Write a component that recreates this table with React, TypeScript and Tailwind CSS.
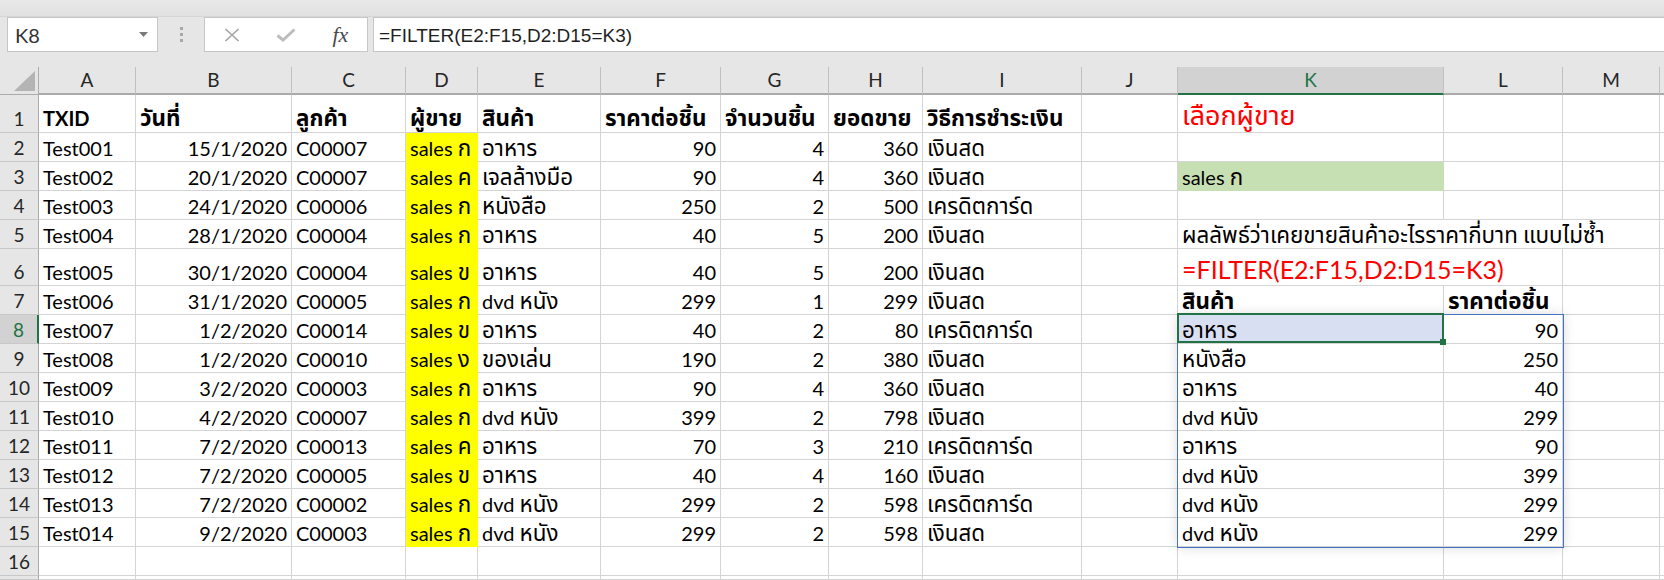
import React from 'react';

type Tone = 'plain' | 'yellow' | 'green' | 'picked';

const toneClass: Record<Tone, string> = {
  plain: 'bg-white border-[#d4d4d4]',
  yellow: 'bg-[#ffff00] border-[#ffff00]',
  green: 'bg-[#c6e0b4] border-[#c6e0b4]',
  picked: 'bg-[#d9dff2] border-[#d4d4d4]',
};

const letters = ['A', 'B', 'C', 'D', 'E', 'F', 'G', 'H', 'I', 'J', 'K', 'L', 'M', ''];

const heads = ['TXID', 'วันที่', 'ลูกค้า', 'ผู้ขาย', 'สินค้า', 'ราคาต่อชิ้น', 'จำนวนชิ้น', 'ยอดขาย', 'วิธีการชำระเงิน'];

const sales: string[][] = [
  ['Test001', '15/1/2020', 'C00007', 'sales ก', 'อาหาร', '90', '4', '360', 'เงินสด'],
  ['Test002', '20/1/2020', 'C00007', 'sales ค', 'เจลล้างมือ', '90', '4', '360', 'เงินสด'],
  ['Test003', '24/1/2020', 'C00006', 'sales ก', 'หนังสือ', '250', '2', '500', 'เครดิตการ์ด'],
  ['Test004', '28/1/2020', 'C00004', 'sales ก', 'อาหาร', '40', '5', '200', 'เงินสด'],
  ['Test005', '30/1/2020', 'C00004', 'sales ข', 'อาหาร', '40', '5', '200', 'เงินสด'],
  ['Test006', '31/1/2020', 'C00005', 'sales ก', 'dvd หนัง', '299', '1', '299', 'เงินสด'],
  ['Test007', '1/2/2020', 'C00014', 'sales ข', 'อาหาร', '40', '2', '80', 'เครดิตการ์ด'],
  ['Test008', '1/2/2020', 'C00010', 'sales ง', 'ของเล่น', '190', '2', '380', 'เงินสด'],
  ['Test009', '3/2/2020', 'C00003', 'sales ก', 'อาหาร', '90', '4', '360', 'เงินสด'],
  ['Test010', '4/2/2020', 'C00007', 'sales ก', 'dvd หนัง', '399', '2', '798', 'เงินสด'],
  ['Test011', '7/2/2020', 'C00013', 'sales ค', 'อาหาร', '70', '3', '210', 'เครดิตการ์ด'],
  ['Test012', '7/2/2020', 'C00005', 'sales ข', 'อาหาร', '40', '4', '160', 'เงินสด'],
  ['Test013', '7/2/2020', 'C00002', 'sales ก', 'dvd หนัง', '299', '2', '598', 'เครดิตการ์ด'],
  ['Test014', '9/2/2020', 'C00003', 'sales ก', 'dvd หนัง', '299', '2', '598', 'เงินสด'],
];

// ผลลัพธ์ของ FILTER ที่ spill ลงมาใน K8:L15
const spill: [string, string][] = [
  ['อาหาร', '90'],
  ['หนังสือ', '250'],
  ['อาหาร', '40'],
  ['dvd หนัง', '299'],
  ['อาหาร', '90'],
  ['dvd หนัง', '399'],
  ['dvd หนัง', '299'],
  ['dvd หนัง', '299'],
];

const rightCols = [1, 5, 6, 7];

// ฟอนต์ไทยที่ได้มาตัวเล็กกว่าใน Excel เลยขยายเฉพาะช่วงที่เป็นภาษาไทย
const thai = (text: string) =>
  text.split(/([\u0E00-\u0E7F]+)/).map((part, i) =>
    /[\u0E00-\u0E7F]/.test(part) ? (
      <span key={i} className="text-[1.12em]">
        {part}
      </span>
    ) : (
      part
    )
  );

const Cell: React.FC<{
  children?: React.ReactNode;
  tone?: Tone;
  right?: boolean;
  extra?: string;
}> = ({ children, tone = 'plain', right = false, extra = '' }) => (
  <div
    className={`flex items-end whitespace-nowrap border-r border-b px-[4px] pb-[2px] text-[20px] leading-[22px] ${toneClass[tone]} ${right ? 'justify-end' : ''} ${extra}`}
  >
    {typeof children === 'string' ? <span>{thai(children)}</span> : children}
  </div>
);

const RowHead: React.FC<{ n: string; active?: boolean }> = ({ n, active = false }) => (
  <div
    className={`flex items-end justify-center border-b border-b-[#c8c8c8] pb-[3px] text-[19px] leading-[20px] ${
      active ? 'border-r-2 border-r-[#217346] bg-[#d2d2d2] text-[#217346]' : 'border-r border-r-[#ababab] bg-[#e6e6e6] text-[#262626]'
    }`}
  >
    {n}
  </div>
);

const FormulaBar: React.FC = () => (
  <div className="flex h-[35px] items-stretch pl-[7px]">
    <div className="flex w-[151px] items-center justify-between border border-[#c6c6c6] bg-white pl-[7px] pr-[9px]">
      <span className="text-[20px] leading-none text-[#333]">K8</span>
      <svg width="9" height="5" viewBox="0 0 9 5">
        <path d="M0 0h9L4.5 5z" fill="#7b7b7b" />
      </svg>
    </div>
    <div className="flex w-[46px] flex-col items-center justify-center gap-[3px]">
      <span className="h-[3px] w-[3px] bg-[#a8a8a8]" />
      <span className="h-[3px] w-[3px] bg-[#a8a8a8]" />
      <span className="h-[3px] w-[3px] bg-[#a8a8a8]" />
    </div>
    <div className="flex w-[164px] items-center border border-[#c6c6c6] bg-white">
      <div className="flex w-[55px] justify-center">
        <svg width="16" height="14" viewBox="0 0 16 14">
          <path d="M1.5 1l13 12M14.5 1l-13 12" stroke="#a3a3a3" strokeWidth="1.6" fill="none" />
        </svg>
      </div>
      <div className="flex w-[55px] justify-center">
        <svg width="20" height="14" viewBox="0 0 20 14">
          <path d="M1.5 7.5l5.5 4.5L18.5 1.5" stroke="#bdbdbd" strokeWidth="3" fill="none" />
        </svg>
      </div>
      <div className="flex w-[54px] justify-center font-['Liberation_Serif',serif] text-[22px] italic leading-none text-[#4a4a4a]">
        fx
      </div>
    </div>
    <div className="ml-[5px] flex flex-1 items-center border border-r-0 border-[#c6c6c6] bg-white pt-[3px] pl-[5px] font-['Liberation_Sans',sans-serif] text-[19px] text-[#1f1f1f]">
      =FILTER(E2:F15,D2:D15=K3)
    </div>
  </div>
);

const SpillRange: React.FC = () => (
  <div className="relative z-10 col-span-2 row-span-8 grid grid-cols-[266px_119px] grid-rows-[repeat(8,29px)] shadow-[0_0_12px_rgba(0,0,0,0.16)] outline-1 outline-solid outline-[#4472c4]">
    {spill.map(([name, price], i) => (
      <React.Fragment key={i}>
        <Cell tone={i === 0 ? 'picked' : 'plain'} extra={i === 0 ? 'relative' : ''}>
          <span>{thai(name)}</span>
          {i === 0 && (
            <>
              <span className="pointer-events-none absolute -top-[2px] -left-px -right-px bottom-0 border-2 border-[#217346]" />
              <span className="absolute -right-[3px] -bottom-[2px] h-[6px] w-[6px] bg-[#217346]" />
            </>
          )}
        </Cell>
        <Cell right>{price}</Cell>
      </React.Fragment>
    ))}
  </div>
);

const Sheet: React.FC = () => {
  const body: React.ReactNode[] = [];

  for (let r = 1; r <= 17; r++) {
    body.push(<RowHead key={`h${r}`} n={r <= 16 ? String(r) : ''} active={r === 8} />);

    for (let c = 0; c < 9; c++) {
      const key = `${r}-${c}`;
      if (r === 1) {
        body.push(
          <Cell key={key} extra="font-bold pb-[3px]">
            {heads[c]}
          </Cell>
        );
      } else if (r <= 15) {
        body.push(
          <Cell key={key} tone={c === 3 ? 'yellow' : 'plain'} right={rightCols.includes(c)}>
            {sales[r - 2][c]}
          </Cell>
        );
      } else {
        body.push(<Cell key={key} />);
      }
    }

    // J
    body.push(<Cell key={`${r}-J`} />);

    // K, L, M
    if (r === 1) {
      body.push(
        <Cell key="K1" extra="pb-[3px] text-[24px] leading-[26px] text-[#ff0000]">
          เลือกผู้ขาย
        </Cell>
      );
      body.push(<Cell key="L1" />, <Cell key="M1" />);
    } else if (r === 3) {
      body.push(<Cell key="K3" tone="green">sales ก</Cell>, <Cell key="L3" />, <Cell key="M3" />);
    } else if (r === 5) {
      body.push(
        <Cell key="K5" extra="col-span-3">
          ผลลัพธ์ว่าเคยขายสินค้าอะไรราคากี่บาท แบบไม่ซ้ำ
        </Cell>
      );
    } else if (r === 6) {
      body.push(
        <Cell key="K6" extra="col-span-2 pb-[3px] text-[25px] leading-[26px] text-[#ff0000]">
          =FILTER(E2:F15,D2:D15=K3)
        </Cell>
      );
      body.push(<Cell key="M6" />);
    } else if (r === 7) {
      body.push(
        <Cell key="K7" extra="font-bold">สินค้า</Cell>,
        <Cell key="L7" extra="font-bold">ราคาต่อชิ้น</Cell>,
        <Cell key="M7" />
      );
    } else if (r === 8) {
      body.push(<SpillRange key="spill" />, <Cell key="M8" />);
    } else if (r >= 9 && r <= 15) {
      body.push(<Cell key={`M${r}`} />);
    } else {
      body.push(<Cell key={`K${r}`} />, <Cell key={`L${r}`} />, <Cell key={`M${r}`} />);
    }

    // N (ขอบขวาที่เห็นแค่นิดเดียว)
    body.push(<Cell key={`${r}-N`} />);
  }

  return (
    <div className="grid h-[513px] grid-cols-[39px_97px_156px_114px_72px_123px_120px_108px_94px_159px_96px_266px_119px_97px_1fr] grid-rows-[28px_38px_29px_29px_29px_29px_37px_29px_29px_29px_29px_29px_29px_29px_29px_29px_29px_1fr]">
      <div className="relative border-r border-b border-[#ababab] bg-[#e6e6e6]">
        <svg className="absolute right-[3px] bottom-[3px]" width="21" height="20" viewBox="0 0 21 20">
          <path d="M21 0V20H0z" fill="#b4b4b4" />
        </svg>
      </div>
      {letters.map((l, i) => (
        <div
          key={`c${i}`}
          className={`flex items-center justify-center border-r border-b-2 border-r-[#c0c0c0] text-[19px] ${
            l === 'K' ? 'border-b-[#217346] bg-[#d2d2d2] text-[#217346]' : 'border-b-[#ababab] bg-[#e6e6e6] text-[#262626]'
          }`}
        >
          {l}
        </div>
      ))}
      {body}
    </div>
  );
};

export default function App() {
  return (
    <div className="h-[580px] w-[1664px] overflow-hidden bg-[#e6e6e6] font-['Lato','Noto_Sans_Thai','Tahoma','DejaVu_Sans',sans-serif] text-black">
      <div className="h-[17px] border-b border-[#d6d6d6] bg-gradient-to-b from-[#e9e9e9] to-[#e1e1e1]" />
      <FormulaBar />
      <div className="h-[15px]" />
      <Sheet />
    </div>
  );
}
